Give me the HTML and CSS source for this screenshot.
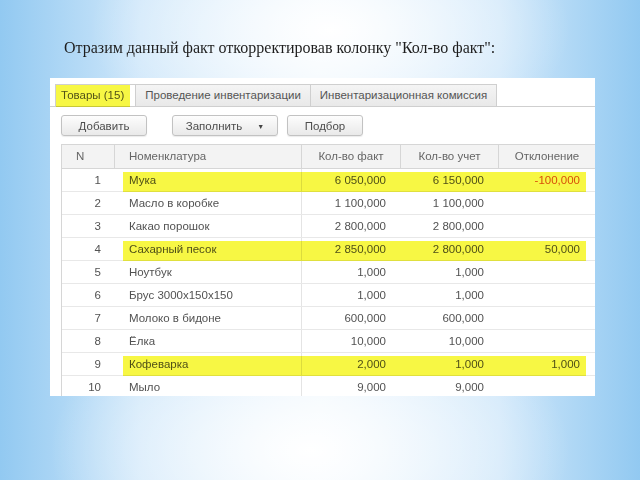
FILE: index.html
```html
<!DOCTYPE html>
<html lang="ru">

<head>
  <meta charset="UTF-8" />
  <meta name="viewport" content="width=device-width, initial-scale=1.0" />
  <title>Инвентаризация</title>
  <link rel="stylesheet" href="styles.css">
</head>

<body>
  <main class="slide">
    <h1 class="slide-title">Отразим данный факт откорректировав колонку "Кол-во факт":</h1>

    <section class="doc">
      <nav class="tabs">
        <div class="tab tab-active">Товары (15)</div>
        <div class="tab">Проведение инвентаризации</div>
        <div class="tab">Инвентаризационная комиссия</div>
      </nav>

      <div class="toolbar">
        <button class="btn btn-add">Добавить</button>
        <button class="btn btn-fill">Заполнить <span class="caret">&#9660;</span></button>
        <button class="btn btn-pick">Подбор</button>
      </div>

      <div class="grid">
        <div class="row head">
          <div class="cell c-n">N</div>
          <div class="cell c-name">Номенклатура</div>
          <div class="cell c-num">Кол-во факт</div>
          <div class="cell c-num">Кол-во учет</div>
          <div class="cell c-num">Отклонение</div>
        </div>
        <div class="row mark">
          <div class="cell c-n">1</div>
          <div class="cell c-name">Мука</div>
          <div class="cell c-num">6 050,000</div>
          <div class="cell c-num">6 150,000</div>
          <div class="cell c-num minus">-100,000</div>
        </div>
        <div class="row">
          <div class="cell c-n">2</div>
          <div class="cell c-name">Масло в коробке</div>
          <div class="cell c-num">1 100,000</div>
          <div class="cell c-num">1 100,000</div>
          <div class="cell c-num"></div>
        </div>
        <div class="row">
          <div class="cell c-n">3</div>
          <div class="cell c-name">Какао порошок</div>
          <div class="cell c-num">2 800,000</div>
          <div class="cell c-num">2 800,000</div>
          <div class="cell c-num"></div>
        </div>
        <div class="row mark">
          <div class="cell c-n">4</div>
          <div class="cell c-name">Сахарный песок</div>
          <div class="cell c-num">2 850,000</div>
          <div class="cell c-num">2 800,000</div>
          <div class="cell c-num">50,000</div>
        </div>
        <div class="row">
          <div class="cell c-n">5</div>
          <div class="cell c-name">Ноутбук</div>
          <div class="cell c-num">1,000</div>
          <div class="cell c-num">1,000</div>
          <div class="cell c-num"></div>
        </div>
        <div class="row">
          <div class="cell c-n">6</div>
          <div class="cell c-name">Брус 3000х150х150</div>
          <div class="cell c-num">1,000</div>
          <div class="cell c-num">1,000</div>
          <div class="cell c-num"></div>
        </div>
        <div class="row">
          <div class="cell c-n">7</div>
          <div class="cell c-name">Молоко в бидоне</div>
          <div class="cell c-num">600,000</div>
          <div class="cell c-num">600,000</div>
          <div class="cell c-num"></div>
        </div>
        <div class="row">
          <div class="cell c-n">8</div>
          <div class="cell c-name">Ёлка</div>
          <div class="cell c-num">10,000</div>
          <div class="cell c-num">10,000</div>
          <div class="cell c-num"></div>
        </div>
        <div class="row mark">
          <div class="cell c-n">9</div>
          <div class="cell c-name">Кофеварка</div>
          <div class="cell c-num">2,000</div>
          <div class="cell c-num">1,000</div>
          <div class="cell c-num">1,000</div>
        </div>
        <div class="row">
          <div class="cell c-n">10</div>
          <div class="cell c-name">Мыло</div>
          <div class="cell c-num">9,000</div>
          <div class="cell c-num">9,000</div>
          <div class="cell c-num"></div>
        </div>
      </div>
    </section>
  </main>
</body>

</html>
```

FILE: styles.css
```css
* {
  box-sizing: border-box;
}

html,
body {
  margin: 0;
  width: 640px;
  height: 480px;
  overflow: hidden;
}

body {
  background:
    radial-gradient(ellipse 240px 130px at 330px 30px, #ffffff 0%, rgba(255, 255, 255, 0) 100%),
    radial-gradient(ellipse 260px 150px at 310px 450px, #ffffff 0%, rgba(255, 255, 255, 0) 100%),
    linear-gradient(to right, #92c9f1 0%, #cfe7fa 22%, #eaf5fd 50%, #cfe7fa 78%, #92c9f1 100%);
}

.slide {
  display: flex;
  flex-direction: column;
}

.slide-title {
  margin: 0;
  padding: 39px 0 0 64px;
  font-family: "Liberation Serif", "Times New Roman", serif;
  font-weight: normal;
  font-size: 16px;
  line-height: 18px;
  color: #1e1e1e;
}

.doc {
  margin: 21px 0 0 50px;
  width: 545px;
  height: 318px;
  background: #fff;
  overflow: hidden;
  font-family: "Liberation Sans", Arial, sans-serif;
  font-size: 11.5px;
  color: #525252;
}

/* tabs */
.tabs {
  display: flex;
  padding: 6px 0 0 5px;
  border-bottom: 1px solid #cfcfcf;
}

.tab {
  height: 22px;
  line-height: 21px;
  padding: 0 9px;
  background: linear-gradient(#f4f4f4, #e9e9e9);
  border: 1px solid #cfcfcf;
  border-bottom: none;
  border-left: none;
  color: #555;
  position: relative;
}

.tab:first-child {
  border-left: 1px solid #cfcfcf;
}

.tab-active {
  background: #fff;
  padding: 0 11px 0 5px;
}

.tab-active::before {
  content: "";
  position: absolute;
  left: 0;
  top: 0;
  bottom: -1px;
  right: 5px;
  background: #f7f744;
  mix-blend-mode: multiply;
}

/* toolbar */
.toolbar {
  display: flex;
  padding: 8px 0 0 11px;
}

.btn {
  height: 21px;
  padding: 0;
  font-family: inherit;
  font-size: 11.5px;
  color: #4d4d4d;
  background: linear-gradient(#fdfdfd, #e9e9e9);
  border: 1px solid #c2c2c2;
  border-radius: 3px;
  box-shadow: 0 1px 1px rgba(0, 0, 0, 0.08);
}

.btn-add {
  width: 86px;
  margin-right: 25px;
}

.btn-fill {
  width: 106px;
  margin-right: 9px;
}

.btn-pick {
  width: 76px;
}

.caret {
  font-size: 7px;
  margin-left: 12px;
  vertical-align: 1px;
  color: #444;
}

/* table */
.grid {
  margin: 8px 0 0 11px;
  border-left: 1px solid #d6d6d6;
}

.row {
  display: grid;
  grid-template-columns: 53px 187px 99px 98px 1fr;
  height: 23px;
  border-bottom: 1px solid #e8e8e8;
  position: relative;
}

.row.head {
  height: 25px;
  background: #f3f3f3;
  border-top: 1px solid #d6d6d6;
  border-bottom: 1px solid #d6d6d6;
  color: #666;
}

.cell {
  line-height: 23px;
  white-space: nowrap;
  overflow: hidden;
}

.head .cell {
  line-height: 23px;
  border-right: 1px solid #d6d6d6;
  text-align: center;
  padding: 0;
}

.head .cell:last-child {
  border-right: none;
}

.c-n {
  text-align: right;
  padding-right: 14px;
}

.head .c-n {
  text-align: left;
  padding-left: 14px;
}

.c-name {
  padding-left: 14px;
  border-right: 1px solid #e4e4e4;
}

.head .c-name {
  text-align: left;
  padding-left: 14px;
}

.c-num {
  text-align: right;
  padding-right: 15px;
}

.minus {
  color: #e0521c;
}

.mark::before {
  content: "";
  position: absolute;
  left: 61px;
  right: 9px;
  top: 3px;
  bottom: -1px;
  background: #f7f744;
  mix-blend-mode: multiply;
  pointer-events: none;
}
```
